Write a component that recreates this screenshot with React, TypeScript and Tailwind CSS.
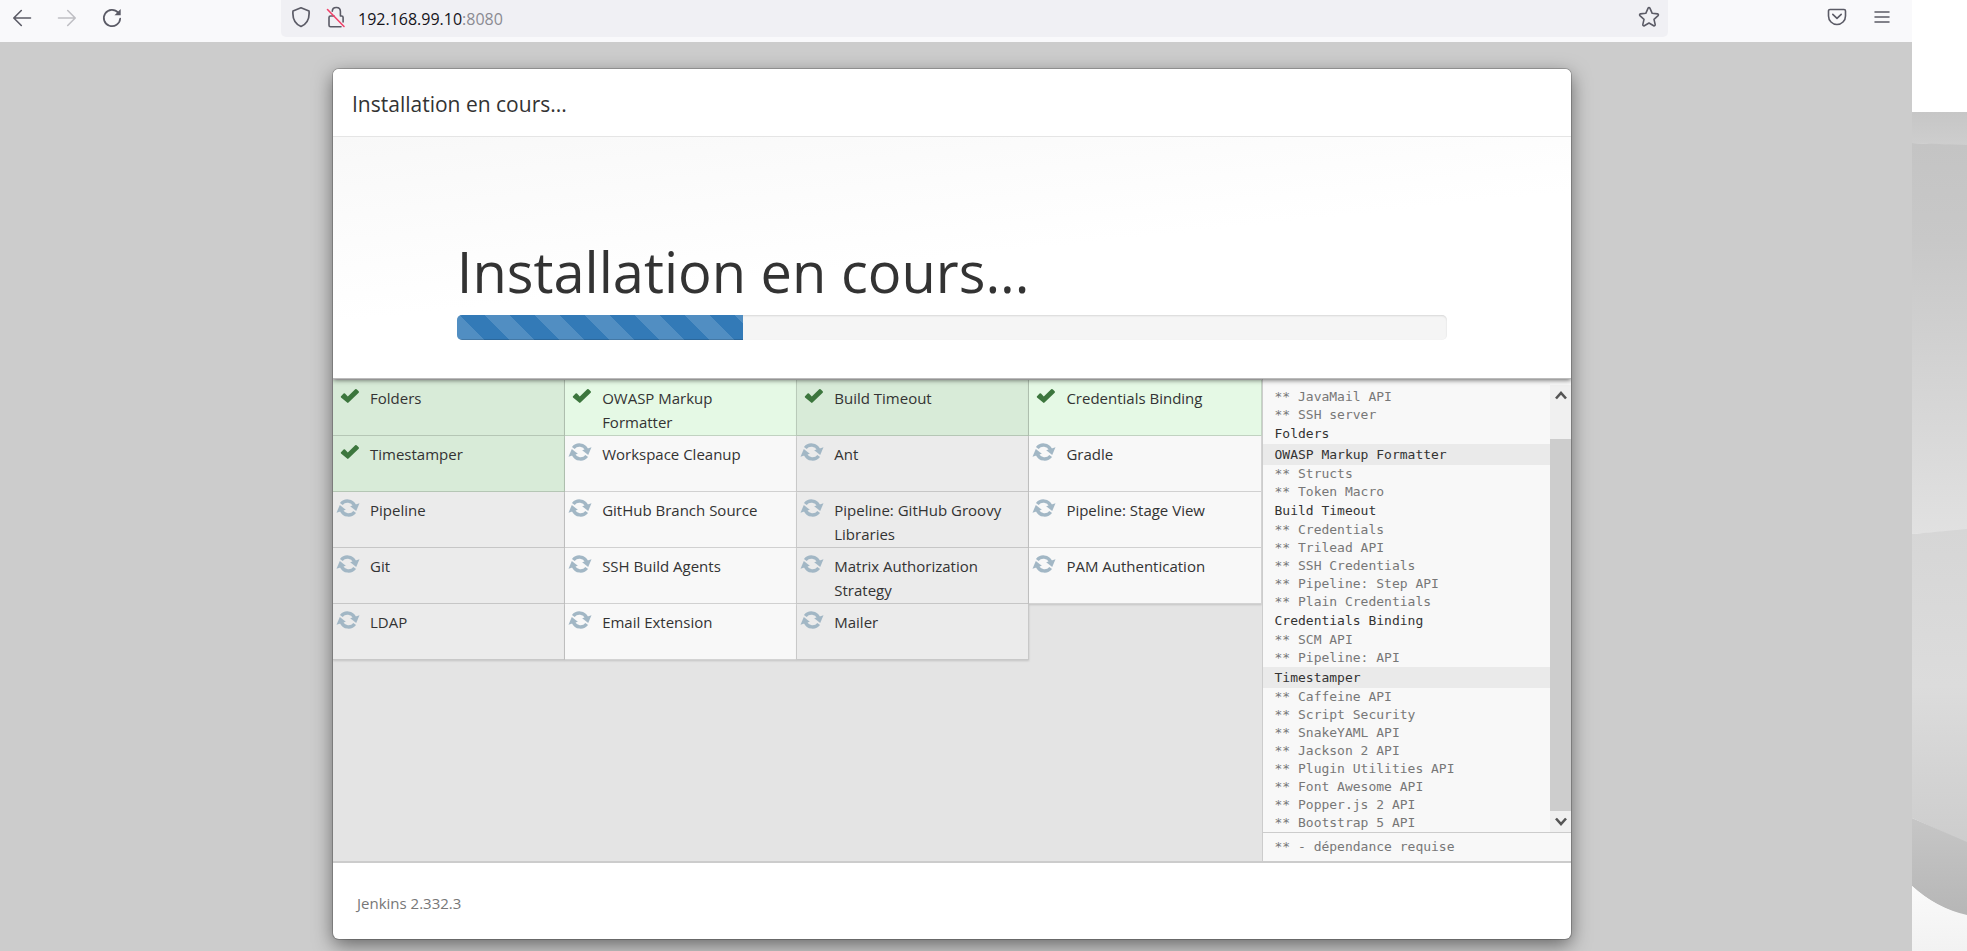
const plugins: [string, boolean][] = [
  ["Folders", true],
  ["OWASP Markup Formatter", true],
  ["Build Timeout", true],
  ["Credentials Binding", true],
  ["Timestamper", true],
  ["Workspace Cleanup", false],
  ["Ant", false],
  ["Gradle", false],
  ["Pipeline", false],
  ["GitHub Branch Source", false],
  ["Pipeline: GitHub Groovy Libraries", false],
  ["Pipeline: Stage View", false],
  ["Git", false],
  ["SSH Build Agents", false],
  ["Matrix Authorization Strategy", false],
  ["PAM Authentication", false],
  ["LDAP", false],
  ["Email Extension", false],
  ["Mailer", false],
];

type LogLine = { text: string; kind: "dep" | "plain" | "band" };

const log: LogLine[] = [
  { text: "** JavaMail API", kind: "dep" },
  { text: "** SSH server", kind: "dep" },
  { text: "Folders", kind: "plain" },
  { text: "OWASP Markup Formatter", kind: "band" },
  { text: "** Structs", kind: "dep" },
  { text: "** Token Macro", kind: "dep" },
  { text: "Build Timeout", kind: "plain" },
  { text: "** Credentials", kind: "dep" },
  { text: "** Trilead API", kind: "dep" },
  { text: "** SSH Credentials", kind: "dep" },
  { text: "** Pipeline: Step API", kind: "dep" },
  { text: "** Plain Credentials", kind: "dep" },
  { text: "Credentials Binding", kind: "plain" },
  { text: "** SCM API", kind: "dep" },
  { text: "** Pipeline: API", kind: "dep" },
  { text: "Timestamper", kind: "band" },
  { text: "** Caffeine API", kind: "dep" },
  { text: "** Script Security", kind: "dep" },
  { text: "** SnakeYAML API", kind: "dep" },
  { text: "** Jackson 2 API", kind: "dep" },
  { text: "** Plugin Utilities API", kind: "dep" },
  { text: "** Font Awesome API", kind: "dep" },
  { text: "** Popper.js 2 API", kind: "dep" },
  { text: "** Bootstrap 5 API", kind: "dep" },
];

const lineStyles = {
  dep: "h-[18px] text-[#777]",
  plain: "h-5 text-[#333]",
  band: "h-[21px] bg-[#eaeaea] text-[#333]",
};

function BackIcon() {
  return (
    <svg width="20" height="20" viewBox="0 0 20 20" fill="none" stroke="currentColor" strokeWidth="1.6" strokeLinecap="round" strokeLinejoin="round">
      <path d="M18.5 10H2M9.300 2.500 1.800 10l7.500 7.500" />
    </svg>
  );
}

function ForwardIcon() {
  return (
    <svg width="20" height="20" viewBox="0 0 20 20" fill="none" stroke="currentColor" strokeWidth="1.6" strokeLinecap="round" strokeLinejoin="round">
      <path d="M1.500 10H18M10.700 2.500l7.500 7.500-7.500 7.500" />
    </svg>
  );
}

function ReloadIcon() {
  return (
    <svg width="20" height="20" viewBox="0 0 20 20" fill="none" stroke="currentColor" strokeWidth="1.7" strokeLinecap="round">
      <path d="M16.200 4.600A8.200 8.200 0 1 0 18.200 10.500" />
      <path d="M18.700 1v6.200h-6.200z" fill="currentColor" stroke="none" />
    </svg>
  );
}

function ShieldIcon() {
  return (
    <svg width="20" height="22" viewBox="0 0 20 22" fill="none" stroke="currentColor" strokeWidth="1.7" strokeLinejoin="round">
      <path d="M10 1.800 18 5c.6 6-1.400 12.500-8 15.500C3.400 17.500 1.400 11 2 5z" />
    </svg>
  );
}

function LockIcon() {
  return (
    <svg width="20" height="24" viewBox="0 0 20 24" fill="none" stroke="currentColor" strokeWidth="1.6" strokeLinecap="round" strokeLinejoin="round">
      <path d="M6.300 6.200C6.500 1.200 14.400 1.200 14.400 6.600V11M8 11H4.500A1.500 1.500 0 0 0 3 12.500v7.800a1.500 1.500 0 0 0 1.500 1.500H15M14.400 11h1.200a1.500 1.500 0 0 1 1.500 1.500V17" />
      <path d="M1.500 4.500l16.500 17" stroke="#f2426a" />
    </svg>
  );
}

function StarIcon() {
  return (
    <svg width="22" height="22" viewBox="0 0 22 22" fill="none" stroke="currentColor" strokeWidth="1.6" strokeLinejoin="round">
      <path d="M10.100 2.200a1 1 0 0 1 1.800 0l2.300 5.100 5.400.6a1 1 0 0 1 .5 1.700l-4.100 3.700 1.200 5.400a1 1 0 0 1-1.500 1L11 17l-4.700 2.700a1 1 0 0 1-1.500-1L6 13.300 1.900 9.600a1 1 0 0 1 .5-1.700l5.400-.6z" />
    </svg>
  );
}

function PocketIcon() {
  return (
    <svg width="20" height="18" viewBox="0 0 20 18" fill="none" stroke="currentColor" strokeWidth="1.6" strokeLinecap="round" strokeLinejoin="round">
      <path d="M3 1.500h14a1.500 1.500 0 0 1 1.500 1.500v5a8.500 8.500 0 0 1-17 0V3A1.500 1.500 0 0 1 3 1.500z" />
      <path d="M5.800 6.300 10 10.300l4.200-4" />
    </svg>
  );
}

function MenuIcon() {
  return (
    <svg width="16" height="14" viewBox="0 0 16 14" fill="none" stroke="currentColor" strokeWidth="1.5" strokeLinecap="round">
      <path d="M1 2h14M1 7h14M1 12h14" />
    </svg>
  );
}

function CheckIcon() {
  return (
    <svg className="block text-[#3c763d]" width="20" height="16" viewBox="0 0 20 16" fill="currentColor">
      <path d="M1 8.200 3.600 5.600q.7-.5 1.400 0L7.800 8.600 15.200 1.200q.7-.5 1.400 0L18.700 3.300q.6.700 0 1.400L8.500 14.600q-.7.600-1.400 0L1 9.400q-.5-.6 0-1.200z" />
    </svg>
  );
}

function SyncIcon() {
  return (
    <svg className="block text-[#a2b7c5]" width="24" height="20" viewBox="0 0 24 20" fill="none" stroke="currentColor" strokeWidth="3.400">
      <path d="M5.300 6A7.600 7.200 0 0 1 18.500 7.500" />
      <path d="M18.700 14A7.600 7.200 0 0 1 5.500 12.500" />
      <path d="M14.200 8.300 23.500 5.300 20.200 13z" fill="currentColor" stroke="none" />
      <path d="M9.800 11.700.5 14.700 3.800 7z" fill="currentColor" stroke="none" />
    </svg>
  );
}

function Toolbar() {
  return (
    <header className="flex h-[42px] bg-[#f9f9fb] text-[#5b5b66]">
      <nav className="flex h-9 w-[281px] shrink-0 items-center gap-[25px] pl-3">
        <button aria-label="Page précédente" className="flex size-5 items-center justify-center"><BackIcon /></button>
        <button aria-label="Page suivante" disabled className="flex size-5 items-center justify-center text-[#bfbfc4]"><ForwardIcon /></button>
        <button aria-label="Actualiser" className="flex size-5 items-center justify-center"><ReloadIcon /></button>
      </nav>
      <div className="flex h-[37px] min-w-0 flex-1 items-center rounded-b-[5px] bg-[#f0f0f4] pr-2 pl-[10px]">
        <button aria-label="Protection contre le pistage" className="flex w-5 justify-center pb-[3px]"><ShieldIcon /></button>
        <button aria-label="Connexion non sécurisée" className="ml-[15px] flex w-5 justify-center pb-[3px]"><LockIcon /></button>
        <p className="ml-3 flex-1 text-base leading-[22px] text-[#15141a]">
          192.168.99.10<span className="text-[#8b8b92]">:8080</span>
        </p>
        <button aria-label="Ajouter un marque-page" className="flex w-[22px] justify-center pb-[3px]"><StarIcon /></button>
      </div>
      <div className="flex h-[34px] w-[244px] shrink-0 items-center justify-end gap-[27px] pr-[22px]">
        <button aria-label="Pocket" className="flex w-5 justify-center"><PocketIcon /></button>
        <button aria-label="Menu" className="flex w-4 justify-center"><MenuIcon /></button>
      </div>
    </header>
  );
}

function PluginCell({ name, done, even }: { name: string; done: boolean; even: boolean }) {
  const tone = done ? (even ? "bg-[#e5f9e5]" : "bg-[#d8ebd8]") : even ? "bg-[#f8f8f8]" : "bg-[#ebebeb]";
  return (
    <li className={`flex h-14 border-r border-b border-black/15 pt-[6px] shadow-[0_1px_2px_rgba(0,0,0,0.15)] ${tone}`}>
      <span className={`w-[37px] shrink-0 ${done ? "pt-[2px] pl-[7px]" : "pl-[3px]"}`}>
        {done ? <CheckIcon /> : <SyncIcon />}
      </span>
      <span className="pr-3 text-[15px] leading-6 text-[#333]">{name}</span>
    </li>
  );
}

function Log() {
  return (
    <aside className="flex w-1/4 flex-col border-l border-[#ccc] bg-[#f8f8f8] pt-[6px] font-['DejaVu_Sans_Mono',monospace] text-[13px]">
      <div className="flex flex-1">
        <div className="min-w-0 flex-1 pt-[3px]">
          {log.map((line) => (
            <div key={line.text} className={`flex items-center pl-3 whitespace-pre ${lineStyles[line.kind]}`}>
              {line.text}
            </div>
          ))}
        </div>
        <div className="flex w-[21px] flex-col bg-[#f0f0f0] text-[#555]">
          <button aria-label="Défiler vers le haut" className="flex h-[21px] items-center justify-center">
            <svg width="12" height="9" viewBox="0 0 12 9" fill="none" stroke="currentColor" strokeWidth="2.6"><path d="M1 7.500 6 2l5 5.500" /></svg>
          </button>
          <div className="mt-[33px] flex-1 bg-[#cdcdcd]" />
          <button aria-label="Défiler vers le bas" className="flex h-[21px] items-center justify-center">
            <svg width="12" height="9" viewBox="0 0 12 9" fill="none" stroke="currentColor" strokeWidth="2.6"><path d="M1 1.500 6 7l5-5.500" /></svg>
          </button>
        </div>
      </div>
      <p className="flex h-[29px] items-center border-t border-[#ccc] pl-3 text-[#777]">** - dépendance requise</p>
    </aside>
  );
}

function Wizard() {
  return (
    <section className="mx-auto w-full max-w-[1238px] overflow-hidden rounded-[6px] bg-white shadow-[0_0_0_1px_rgba(0,0,0,0.2),0_6px_19px_rgba(0,0,0,0.5)]">
      <h2 className="relative z-10 border-b border-[#e5e5e5] bg-white px-[19px] pt-5 pb-[17px] text-[21px] leading-[30px] text-[#333]">Installation en cours...</h2>
      <div className="relative border-b border-[#bbb] bg-[linear-gradient(174deg,#f8f8f8,#ffffff_50%)] px-[10%] pt-[94px] pb-[38px] shadow-[0_1px_5px_rgba(0,0,0,0.6)]">
        <h1 className="pb-1 text-[56px] leading-[80px] text-[#333]">Installation en cours...</h1>
        <div role="progressbar" aria-label="Installation" aria-valuenow={29} className="h-[25px] overflow-hidden rounded-[5px] bg-[#f5f5f5] shadow-[inset_0_1px_2px_rgba(0,0,0,0.12)]">
          <div
            className="h-full bg-[#337ab7] bg-[linear-gradient(45deg,rgba(255,255,255,0.15)_25%,transparent_25%,transparent_50%,rgba(255,255,255,0.15)_50%,rgba(255,255,255,0.15)_75%,transparent_75%,transparent)] bg-size-[50px_50px] bg-position-[28px_0] shadow-[inset_0_-1px_0_rgba(0,0,0,0.15)]"
            style={{ width: "28.9%" }}
          />
        </div>
      </div>
      <div className="flex border-b-2 border-[#ccc] bg-[#e4e4e4]">
        <ul className="grid flex-1 grid-cols-4 content-start pt-px">
          {plugins.map(([name, done], i) => (
            <PluginCell key={name} name={name} done={done} even={i % 2 === 1} />
          ))}
        </ul>
        <Log />
      </div>
      <footer className="px-6 pt-7 pb-6 text-[15px] leading-6 text-[#777]">Jenkins 2.332.3</footer>
    </section>
  );
}

function Wallpaper() {
  return (
    <aside className="flex w-[55px] shrink-0 flex-col bg-white pt-28">
      <svg className="w-full flex-1" viewBox="0 0 55 839" preserveAspectRatio="none" width="55" height="839">
        <defs>
          <linearGradient id="band" x1="0" y1="0" x2="0" y2="1"><stop offset="0" stopColor="#c6c6c6" /><stop offset="1" stopColor="#cecece" /></linearGradient>
          <linearGradient id="upper" x1="0" y1="0" x2="0" y2="1"><stop offset="0" stopColor="#c4c4c4" /><stop offset="0.25" stopColor="#c8c8c8" /><stop offset="1" stopColor="#e1e1e1" /></linearGradient>
          <linearGradient id="middle" x1="0" y1="0" x2="0" y2="1"><stop offset="0" stopColor="#d6d6d6" /><stop offset="0.5" stopColor="#dcdcdc" /><stop offset="1" stopColor="#cdcdcd" /></linearGradient>
          <linearGradient id="lower" x1="0" y1="0" x2="0" y2="1"><stop offset="0" stopColor="#c6c6c6" /><stop offset="1" stopColor="#b6b6b6" /></linearGradient>
          <linearGradient id="base" x1="0" y1="0" x2="0" y2="1"><stop offset="0" stopColor="#fafafa" /><stop offset="1" stopColor="#f2f2f2" /></linearGradient>
        </defs>
        <path d="M0 0H55V34L0 31z" fill="url(#band)" />
        <path d="M0 31 55 33V418L0 422z" fill="url(#upper)" />
        <path d="M0 422 55 417V731L0 706z" fill="url(#middle)" />
        <path d="M0 706 55 730V804Q24 796 0 774z" fill="url(#lower)" />
        <path d="M0 774Q24 796 55 803V839H0z" fill="url(#base)" />
      </svg>
    </aside>
  );
}

export default function App() {
  return (
    <div className="flex min-h-screen bg-[#ccc] font-['Open_Sans','Noto_Sans',sans-serif]">
      <div className="flex min-w-0 flex-1 flex-col overflow-hidden">
        <Toolbar />
        <main className="flex-1 pt-[27px] pr-2 pb-[10px]">
          <Wizard />
        </main>
      </div>
      <Wallpaper />
    </div>
  );
}
